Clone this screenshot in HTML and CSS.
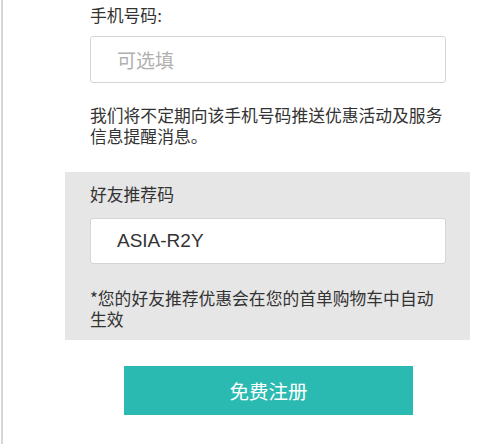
FILE: index.html
```html
<!DOCTYPE html>
<html lang="zh-CN">
<head>
    <meta charset="UTF-8">
    <meta name="viewport" content="width=device-width, initial-scale=1.0">
    <title>注册</title>
    <link rel="stylesheet" href="styles.css">
</head>
<body>
    <div class="page">
        <form class="signup-form">
            <div class="field">
                <label class="field-label" for="phone">手机号码:</label>
                <input class="text-input" type="text" id="phone" placeholder="可选填">
                <p class="hint">我们将不定期向该手机号码推送优惠活动及服务信息提醒消息。</p>
            </div>

            <div class="referral-box">
                <label class="field-label" for="referral">好友推荐码</label>
                <input class="text-input code-input" type="text" id="referral" value="ASIA-R2Y">
                <p class="hint note">*您的好友推荐优惠会在您的首单购物车中自动生效</p>
            </div>

            <button class="submit-button" type="button">免费注册</button>
        </form>
    </div>
</body>
</html>
```

FILE: styles.css
```css
body {
    margin: 0;
    background: #fff;
    font-family: "Noto Sans CJK SC", "Liberation Sans", sans-serif;
    color: #333;
}

.page {
    margin-left: 1px;
    border-left: 2px solid #d6d6d6;
    min-height: 444px;
    box-sizing: border-box;
    padding-top: 5px;
}

.signup-form { width: 405px; margin-left: 62px; }

.field { padding: 0 24px 0 25px; }

.field-label {
    display: block;
    font-size: 16.8px;
    line-height: 21px;
    color: #333;
}

.text-input {
    display: block;
    box-sizing: border-box;
    width: 356px;
    height: 47px;
    margin-top: 10px;
    padding: 0 0 0 26px;
    border: 1px solid #d5d5d5;
    border-radius: 3px;
    background: #fff;
    font-family: "Noto Sans CJK SC", "Liberation Sans", sans-serif;
    font-size: 19px;
    color: #333;
    outline: none;
}
.text-input::placeholder { color: #b0b0b0; }

.hint {
    margin: 22px 0 0;
    font-size: 16.8px;
    line-height: 21px;
    color: #333;
}

.referral-box {
    margin-top: 25px;
    padding: 12px 24px 10px 25px;
    background: #e6e6e6;
}

.code-input {
    margin-top: 13px;
    height: 46px;
    font-family: "Liberation Sans", "Noto Sans CJK SC", sans-serif;
}

.note { margin-top: 24px; }

.submit-button {
    display: block;
    width: 289px;
    height: 49px;
    margin: 26px 0 0 59px;
    border: none;
    background: #2bbab2;
    color: #fff;
    font-family: "Noto Sans CJK SC", "Liberation Sans", sans-serif;
    font-size: 19.5px;
    cursor: pointer;
}
```
